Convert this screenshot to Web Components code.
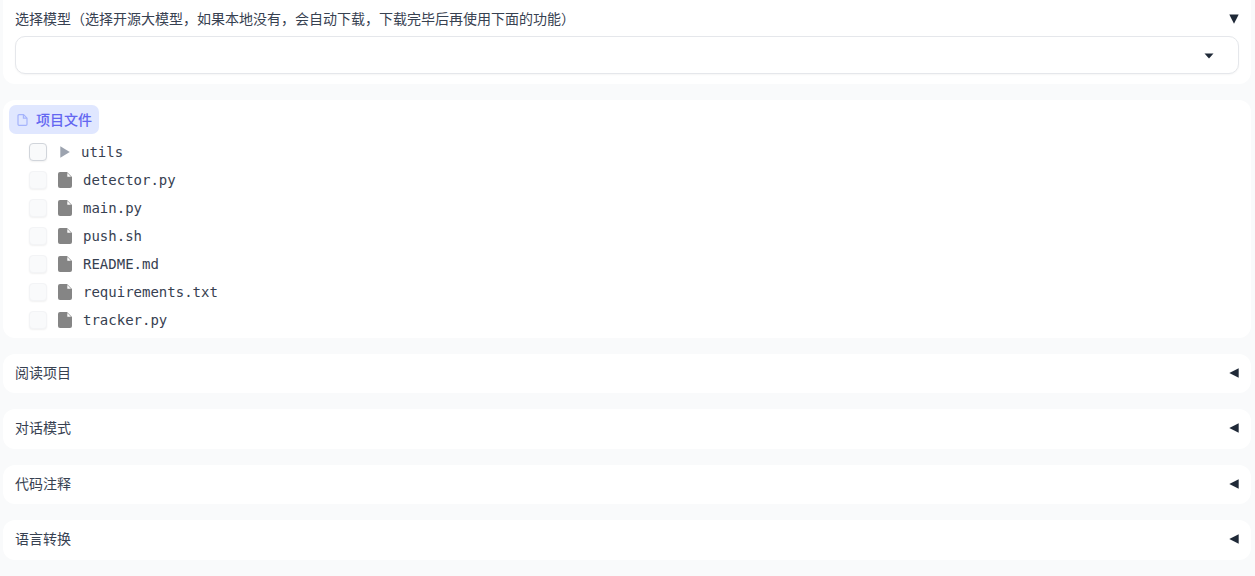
<!DOCTYPE html>
<html lang="zh">
<head>
<meta charset="utf-8">
<style>
  html, body { margin: 0; height: 576px; overflow: hidden; background: #f9fafb; }
  body {
    padding: 0 4px 0 3px;
    font-family: "Inter", "Noto Sans CJK SC", sans-serif;
    font-size: 14px;
    color: #374151;
    display: flex;
    flex-direction: column;
    gap: 16px;
  }
</style>
</head>
<body>
  <fold-panel label="选择模型&#xFF08;选择开源大模型&#xFF0C;如果本地没有&#xFF0C;会自动下载&#xFF0C;下载完毕后再使用下面的功能&#xFF09;" open first>
    <model-select></model-select>
  </fold-panel>
  <file-panel>
    <file-row name="utils" folder></file-row>
    <file-row name="detector.py"></file-row>
    <file-row name="main.py"></file-row>
    <file-row name="push.sh"></file-row>
    <file-row name="README.md"></file-row>
    <file-row name="requirements.txt"></file-row>
    <file-row name="tracker.py"></file-row>
  </file-panel>
  <fold-panel label="阅读项目"></fold-panel>
  <fold-panel label="对话模式"></fold-panel>
  <fold-panel label="代码注释"></fold-panel>
  <fold-panel label="语言转换"></fold-panel>

<script>
class FoldPanel extends HTMLElement {
  constructor() {
    super();
    this.attachShadow({ mode: 'open' });
    const label = this.getAttribute('label') || '';
    const open = this.hasAttribute('open');
    this.shadowRoot.innerHTML = `
      <style>
        :host { display: block; background: #fff; border-radius: 12px; padding: 9px 12px 10px; }
        :host([first]) { border-radius: 0 0 12px 12px; }
        .head { display: flex; justify-content: space-between; align-items: center; height: 20.5px; line-height: 20px; color: #374151; }
        :host([first]) .head { height: 19px; }
        .tri { width: 10px; height: 10px; display: block; margin-right: 0.5px; }
        .body { margin-top: 8px; }
      </style>
      <div class="head">
        <span>${label}</span>
        <svg class="tri" viewBox="0 0 10 10">
          <path fill="#1f2937" d="${open ? 'M0.3 0.5H9.7L5 9.7Z' : 'M0.3 5L9.7 0.3V9.7Z'}"/>
        </svg>
      </div>
      ${open ? '<div class="body"><slot></slot></div>' : ''}
    `;
  }
}

class ModelSelect extends HTMLElement {
  constructor() {
    super();
    this.attachShadow({ mode: 'open' });
    this.shadowRoot.innerHTML = `
      <style>
        :host { display: flex; align-items: center; justify-content: flex-end; box-sizing: border-box; height: 38px; border: 1px solid #e5e7eb; border-radius: 10px; background: #fff; padding-right: 24px; box-shadow: 0 1px 2px rgba(0,0,0,.04); }
        svg { width: 10px; height: 6px; display: block; margin-top: 2px; }
      </style>
      <svg viewBox="0 0 10 6"><path fill="#1f2937" d="M0.5 0.5H9.5L5 5.5Z"/></svg>
    `;
  }
}

class FilePanel extends HTMLElement {
  constructor() {
    super();
    this.attachShadow({ mode: 'open' });
    this.shadowRoot.innerHTML = `
      <style>
        :host { display: block; background: #fff; border-radius: 12px; padding: 5px 6px 3.5px; }
        .tab { display: inline-flex; align-items: center; gap: 8px; height: 29px; padding: 0 7px 0 8px; background: #e0e7ff; border-radius: 7px; color: #6366f1; font-weight: 500; line-height: 28px; vertical-align: top; }
        .tab svg { width: 11px; height: 12px; display: block; }
        .tree { padding: 4px 0 0 20px; display: flex; flex-direction: column; }
      </style>
      <div class="tab">
        <svg viewBox="0 0 11 12" fill="none" stroke="#a5b4fc" stroke-width="1.2" stroke-linejoin="round">
          <path d="M2 .7H6.6L10 4.1V10.3A1 1 0 0 1 9 11.3H2A1 1 0 0 1 1 10.3V1.7A1 1 0 0 1 2 .7Z"/>
          <path d="M6.4 .7V4.2H10"/>
        </svg>
        <span>项目文件</span>
      </div>
      <div class="tree"><slot></slot></div>
    `;
  }
}

class FileRow extends HTMLElement {
  constructor() {
    super();
    this.attachShadow({ mode: 'open' });
    const name = this.getAttribute('name');
    const folder = this.hasAttribute('folder');
    const icon = folder
      ? `<svg class="ic" viewBox="0 0 10 12" style="width:10px;height:12px;margin-left:13px"><path fill="#9ca3af" d="M0.3 0.2L9.8 6L0.3 11.8Z"/></svg>`
      : `<svg class="ic" viewBox="0 0 14 16" style="width:14px;height:16px"><path fill="#858585" d="M2 0H9L14 5V14A2 2 0 0 1 12 16H2A2 2 0 0 1 0 14V2A2 2 0 0 1 2 0Z"/><path fill="#fff" d="M9.3 1L13 4.7H9.3Z"/></svg>`;
    this.shadowRoot.innerHTML = `
      <style>
        :host { display: flex; align-items: center; height: 28px; font-family: "DejaVu Sans Mono", "Liberation Mono", monospace; font-size: 14px; color: #374151; }
        .box { box-sizing: border-box; width: 18px; height: 18px; border-radius: 4px; background: #f9fafb; border: 1px solid ${folder ? '#d1d5db' : '#f3f4f6'}; box-shadow: 0 1px 2px rgba(0,0,0,.06); flex: none; }
        .ic { display: block; flex: none; margin-left: 11px; }
        .name { margin-left: 11px; white-space: pre; }
      </style>
      <span class="box"></span>${icon}<span class="name">${name}</span>
    `;
  }
}

customElements.define('fold-panel', FoldPanel);
customElements.define('model-select', ModelSelect);
customElements.define('file-panel', FilePanel);
customElements.define('file-row', FileRow);
</script>
</body>
</html>
